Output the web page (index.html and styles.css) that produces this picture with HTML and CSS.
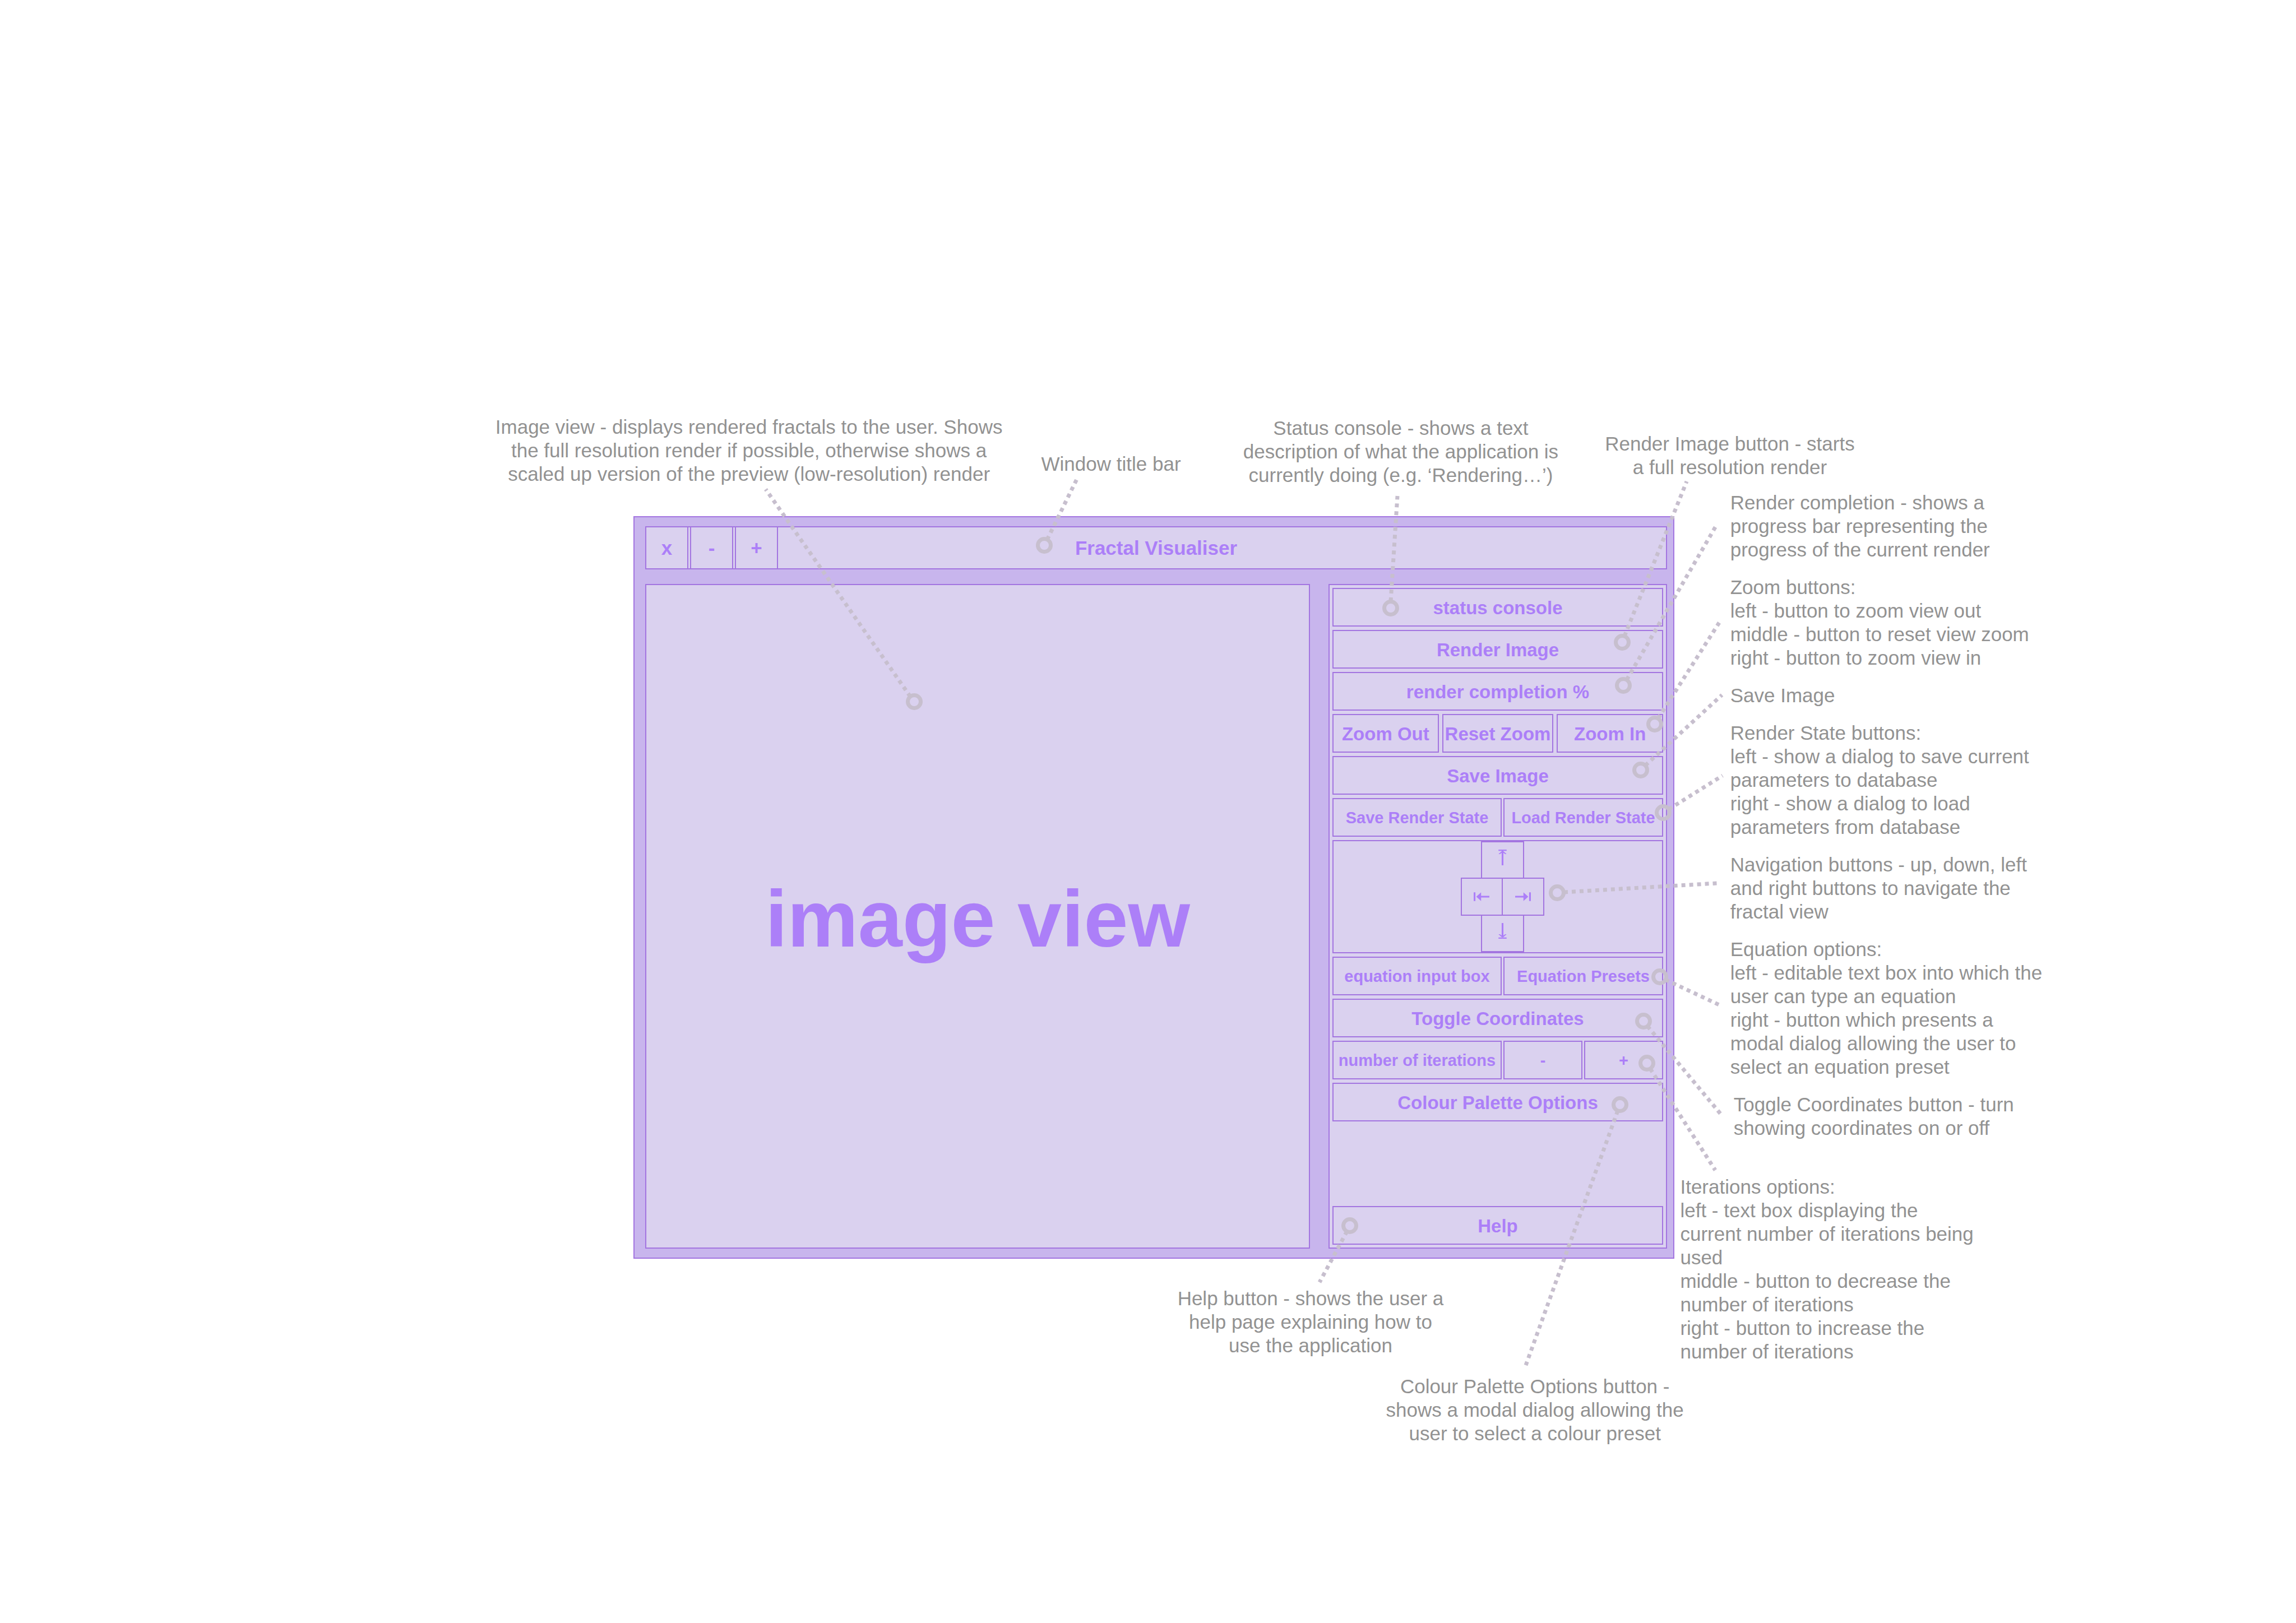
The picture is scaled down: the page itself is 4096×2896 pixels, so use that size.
FILE: index.html
```html
<!DOCTYPE html>
<html lang="en">
<head>
<meta charset="utf-8">
<title>Fractal Visualiser</title>
<link rel="stylesheet" href="styles.css">
</head>
<body>
<main class="board">
  <section class="window" aria-label="Fractal Visualiser">
    <header class="titlebar">
      <div class="window-buttons">
        <button class="window-button" type="button">x</button>
        <button class="window-button" type="button">-</button>
        <button class="window-button" type="button">+</button>
      </div>
      <h1 class="window-title">Fractal Visualiser</h1>
    </header>
    <div class="workspace">
      <div class="image-view">image view</div>
      <div class="controls">
        <output class="cell">status console</output>
        <button class="cell" type="button">Render Image</button>
        <div class="cell">render completion %</div>
        <div class="row row-zoom">
          <button class="cell" type="button">Zoom Out</button>
          <button class="cell" type="button">Reset Zoom</button>
          <button class="cell" type="button">Zoom In</button>
        </div>
        <button class="cell" type="button">Save Image</button>
        <div class="row row-pair">
          <button class="cell cell-small" type="button">Save Render State</button>
          <button class="cell cell-small" type="button">Load Render State</button>
        </div>
        <div class="navigation">
          <button class="nav nav-up" type="button" aria-label="Up">
            <svg class="arrow-tall" viewBox="0 0 56 108"><path d="M0 0H56V9H0ZM28 6L56 31H46L34 22V108H22V22L10 31H0Z"/></svg>
          </button>
          <div class="nav-middle">
            <button class="nav nav-left" type="button" aria-label="Left">
              <svg class="arrow-wide" viewBox="0 0 108 60"><path d="M0 0H12V60H0ZM18 30L51 0V24H108V36H51V60Z"/></svg>
            </button>
            <button class="nav nav-right" type="button" aria-label="Right">
              <svg class="arrow-wide" viewBox="0 0 108 60"><path d="M96 0H108V60H96ZM90 30L57 0V24H0V36H57V60Z"/></svg>
            </button>
          </div>
          <button class="nav nav-down" type="button" aria-label="Down">
            <svg class="arrow-tall" viewBox="0 0 56 108"><path d="M0 99H56V108H0ZM28 102L56 77H46L34 86V0H22V86L10 77H0Z"/></svg>
          </button>
        </div>
        <div class="row row-pair">
          <input class="cell cell-small" type="text" aria-label="Equation" value="equation input box">
          <button class="cell cell-small" type="button">Equation Presets</button>
        </div>
        <button class="cell" type="button">Toggle Coordinates</button>
        <div class="row row-iterations">
          <input class="cell cell-small" type="text" aria-label="Iterations" value="number of iterations">
          <button class="cell cell-small" type="button">-</button>
          <button class="cell cell-small" type="button">+</button>
        </div>
        <button class="cell" type="button">Colour Palette Options</button>
        <button class="cell help" type="button">Help</button>
      </div>
    </div>
  </section>

  <svg class="leaders" viewBox="0 0 4096 2896" aria-hidden="true">
    <g class="rings">
      <circle cx="1631" cy="1252" r="11.5"/>
      <circle cx="1863" cy="973" r="11.5"/>
      <circle cx="2481" cy="1085" r="11.5"/>
      <circle cx="2894" cy="1146" r="11.5"/>
      <circle cx="2896" cy="1223" r="11.5"/>
      <circle cx="2952" cy="1292" r="11.5"/>
      <circle cx="2927" cy="1374" r="11.5"/>
      <circle cx="2967" cy="1450" r="11.5"/>
      <circle cx="2778" cy="1593" r="11.5"/>
      <circle cx="2961" cy="1743" r="11.5"/>
      <circle cx="2932" cy="1822" r="11.5"/>
      <circle cx="2938" cy="1897" r="11.5"/>
      <circle cx="2890" cy="1971" r="11.5"/>
      <circle cx="2408" cy="2187" r="11.5"/>
    </g>
    <g class="dots">
      <path d="M1624 1243L1366 873"/>
      <path d="M1868 963L1921 855"/>
      <path d="M2481 1073L2493 885"/>
      <path d="M2898 1135L3009 859"/>
      <path d="M2902 1213L3061 939"/>
      <path d="M2958 1282L3067 1111"/>
      <path d="M2935 1366L3072 1240"/>
      <path d="M2977 1444L3073 1384"/>
      <path d="M2790 1592L3063 1576"/>
      <path d="M2971 1748L3067 1793"/>
      <path d="M2939 1831L3069 1987"/>
      <path d="M2944 1907L3060 2088"/>
      <path d="M2886 1982L2722 2436"/>
      <path d="M2403 2197L2354 2288"/>
    </g>
  </svg>

  <p class="note centred note-image">Image view - displays rendered fractals to the user. Shows<br>the full resolution render if possible, otherwise shows a<br>scaled up version of the preview (low-resolution) render</p>
  <p class="note centred note-title">Window title bar</p>
  <p class="note centred note-status">Status console - shows a text<br>description of what the application is<br>currently doing (e.g. ‘Rendering…’)</p>
  <p class="note centred note-render">Render Image button - starts<br>a full resolution render</p>
  <aside class="note-column">
    <p class="note">Render completion - shows a<br>progress bar representing the<br>progress of the current render</p>
    <p class="note">Zoom buttons:<br>left - button to zoom view out<br>middle - button to reset view zoom<br>right - button to zoom view in</p>
    <p class="note">Save Image</p>
    <p class="note">Render State buttons:<br>left - show a dialog to save current<br>parameters to database<br>right - show a dialog to load<br>parameters from database</p>
    <p class="note">Navigation buttons - up, down, left<br>and right buttons to navigate the<br>fractal view</p>
    <p class="note">Equation options:<br>left - editable text box into which the<br>user can type an equation<br>right - button which presents a<br>modal dialog allowing the user to<br>select an equation preset</p>
    <p class="note note-toggle">Toggle Coordinates button - turn<br>showing coordinates on or off</p>
  </aside>
  <p class="note note-iterations">Iterations options:<br>left - text box displaying the<br>current number of iterations being<br>used<br>middle - button to decrease the<br>number of iterations<br>right - button to increase the<br>number of iterations</p>
  <p class="note centred note-help">Help button - shows the user a<br>help page explaining how to<br>use the application</p>
  <p class="note centred note-colour">Colour Palette Options button -<br>shows a modal dialog allowing the<br>user to select a colour preset</p>
</main>
</body>
</html>
```
FILE: styles.css
```css
:root {
  --frame: #c8b5ed;
  --panel: #dad1ef;
  --line: #a375e0;
  --ink: #ac7ff8;
  --note: #929292;
  --leader: #c7bfce;
}

* {
  box-sizing: border-box;
}

body {
  margin: 0;
  background: #fff;
  font-family: "Liberation Sans", Arial, Helvetica, sans-serif;
}

button,
input {
  margin: 0;
  padding: 0;
  border-radius: 0;
  font-family: inherit;
}

.board {
  position: relative;
  display: grid;
  grid-template-columns: 1130fr 1857fr 1109fr;
  align-items: start;
  min-height: 100vh;
  padding-top: 921px;
}

/* Application window */

.window {
  grid-column: 2;
  display: flex;
  flex-direction: column;
  gap: 26px;
  padding: 16px 11px 16px 19px;
  border: 2px solid var(--line);
  background: var(--frame);
  color: var(--ink);
  font-weight: bold;
}

.titlebar {
  display: grid;
  align-items: center;
  height: 77px;
  border: 2px solid var(--line);
  background: var(--panel);
}

.window-buttons,
.window-title {
  grid-area: 1 / 1;
}

.window-buttons {
  display: flex;
  gap: 3px;
  height: 100%;
  margin-left: -2px;
}

.window-button {
  width: 77px;
  border: solid var(--line);
  border-width: 0 2px;
  background: none;
  color: inherit;
  font-size: 35px;
  font-weight: bold;
}

.window-title {
  margin: 0;
  font-size: 35px;
  text-align: center;
}

.workspace {
  display: grid;
  grid-template-columns: 1186fr 604fr;
  gap: 33px;
}

.image-view {
  display: flex;
  align-items: center;
  justify-content: center;
  aspect-ratio: 1;
  padding-top: 10px;
  border: 2px solid var(--line);
  background: var(--panel);
  font-size: 142px;
}

.controls {
  display: flex;
  flex-direction: column;
  gap: 6px;
  padding: 5px;
  border: 2px solid var(--line);
  background: var(--panel);
}

.cell {
  display: flex;
  align-items: center;
  justify-content: center;
  width: 100%;
  min-width: 0;
  height: 69px;
  padding-top: 2px;
  border: 2px solid var(--line);
  background: none;
  color: var(--ink);
  font-size: 33px;
  font-weight: bold;
  text-align: center;
  white-space: nowrap;
}

.cell-small {
  font-size: 29px;
}

.row {
  display: grid;
}

.row-zoom {
  grid-template-columns: 190fr 199fr 190fr;
  gap: 6px;
}

.row-pair {
  grid-template-columns: 302fr 285fr;
  gap: 3px;
}

.row-iterations {
  grid-template-columns: 302fr 141fr 141fr;
  gap: 3px;
}

.help {
  margin-top: auto;
}

/* Navigation pad */

.navigation {
  display: flex;
  flex-direction: column;
  align-items: center;
  padding-left: 16px;
  border: 2px solid var(--line);
}

.nav {
  display: flex;
  align-items: center;
  justify-content: center;
  width: 77px;
  height: 67px;
  border: 2px solid var(--line);
  background: none;
}

.nav-up,
.nav-down {
  padding-bottom: 10px;
}

.nav-middle {
  display: flex;
  margin: -2px 0;
}

.nav-middle .nav {
  width: 75px;
  height: 68px;
}

.nav-middle .nav-right {
  width: 76px;
  margin-left: -2px;
}

.arrow-tall {
  width: 15px;
  height: 28px;
  fill: var(--ink);
}

.arrow-wide {
  width: 28px;
  height: 16px;
  fill: var(--ink);
}

/* Annotations */

.leaders {
  position: absolute;
  top: 0;
  left: 0;
  width: 100%;
  fill: none;
  stroke: var(--leader);
  stroke-width: 7;
  pointer-events: none;
}

.dots {
  stroke-dasharray: 7 7;
}

.note {
  margin: 0;
  color: var(--note);
  font-size: 35px;
  line-height: 42px;
  white-space: nowrap;
}

.centred {
  position: absolute;
  text-align: center;
  transform: translateX(-50%);
}

.note-image {
  top: 741px;
  left: 32.62%;
}

.note-title {
  top: 807px;
  left: 48.39%;
}

.note-status {
  top: 743px;
  left: 61.01%;
}

.note-render {
  top: 771px;
  left: 75.34%;
}

.note-help {
  top: 2296px;
  left: 57.08%;
}

.note-colour {
  top: 2453px;
  left: 66.85%;
}

.note-column {
  position: absolute;
  top: 876px;
  left: 75.36%;
  display: flex;
  flex-direction: column;
  gap: 25px;
}

.note-toggle {
  padding-left: 6px;
}

.note-iterations {
  position: absolute;
  top: 2097px;
  left: 73.18%;
}
```
